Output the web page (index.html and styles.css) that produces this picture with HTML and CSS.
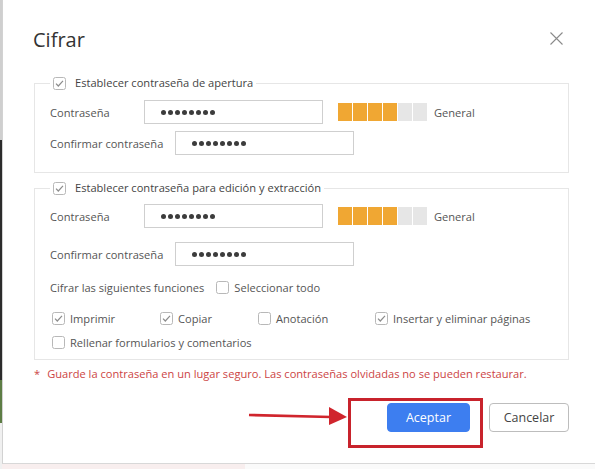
FILE: index.html
```html
<!DOCTYPE html>
<html lang="es">
<head>
<meta charset="utf-8">
<title>Cifrar</title>
<link rel="stylesheet" href="styles.css">
</head>
<body>
<div class="page">
  <div class="backstrip"></div>
  <div class="col">
    <div class="dialog">
      <div class="header">
        <h1 class="title">Cifrar</h1>
        <svg class="close" viewBox="0 0 13 13" width="13" height="13"><path d="M0.5 0.5 L12.5 12.5 M12.5 0.5 L0.5 12.5" stroke="#8a8a8a" stroke-width="1.1" fill="none"/></svg>
      </div>

      <fieldset class="section s1">
        <legend class="legend">
          <svg class="cb" viewBox="0 0 13 13"><rect x="0.5" y="0.5" width="12" height="12" rx="2" fill="#fff" stroke="#b8b8b8"/><path d="M3 6.6 L5.3 9 L10 3.8" fill="none" stroke="#8c8c8c" stroke-width="1.2"/></svg>
          <span class="legend-text">Establecer contraseña de apertura</span>
        </legend>
        <div class="row r-first">
          <span class="label w1">Contraseña</span>
          <div class="pw"><span class="dots"><i></i><i></i><i></i><i></i><i></i><i></i><i></i><i></i></span></div>
          <div class="strength"><b class="on"></b><b class="on"></b><b class="on"></b><b class="on"></b><b></b><b></b></div>
          <span class="level">General</span>
        </div>
        <div class="row r-second">
          <span class="label w2">Confirmar contraseña</span>
          <div class="pw"><span class="dots"><i></i><i></i><i></i><i></i><i></i><i></i><i></i><i></i></span></div>
        </div>
      </fieldset>

      <fieldset class="section s2">
        <legend class="legend">
          <svg class="cb" viewBox="0 0 13 13"><rect x="0.5" y="0.5" width="12" height="12" rx="2" fill="#fff" stroke="#b8b8b8"/><path d="M3 6.6 L5.3 9 L10 3.8" fill="none" stroke="#8c8c8c" stroke-width="1.2"/></svg>
          <span class="legend-text">Establecer contraseña para edición y extracción</span>
        </legend>
        <div class="row r-first2">
          <span class="label w1">Contraseña</span>
          <div class="pw"><span class="dots"><i></i><i></i><i></i><i></i><i></i><i></i><i></i><i></i></span></div>
          <div class="strength"><b class="on"></b><b class="on"></b><b class="on"></b><b class="on"></b><b></b><b></b></div>
          <span class="level">General</span>
        </div>
        <div class="row r-second2">
          <span class="label w2">Confirmar contraseña</span>
          <div class="pw"><span class="dots"><i></i><i></i><i></i><i></i><i></i><i></i><i></i><i></i></span></div>
        </div>
        <div class="line funcs">
          <span class="label">Cifrar las siguientes funciones</span>
          <span class="check sel">
            <svg class="cb" viewBox="0 0 13 13"><rect x="0.5" y="0.5" width="12" height="12" rx="2" fill="#fff" stroke="#b8b8b8"/></svg>
            <span>Seleccionar todo</span>
          </span>
        </div>
        <div class="opts">
          <span class="check">
            <svg class="cb" viewBox="0 0 13 13"><rect x="0.5" y="0.5" width="12" height="12" rx="2" fill="#fff" stroke="#b8b8b8"/><path d="M3 6.6 L5.3 9 L10 3.8" fill="none" stroke="#8c8c8c" stroke-width="1.2"/></svg>
            <span>Imprimir</span>
          </span>
          <span class="check">
            <svg class="cb" viewBox="0 0 13 13"><rect x="0.5" y="0.5" width="12" height="12" rx="2" fill="#fff" stroke="#b8b8b8"/><path d="M3 6.6 L5.3 9 L10 3.8" fill="none" stroke="#8c8c8c" stroke-width="1.2"/></svg>
            <span>Copiar</span>
          </span>
          <span class="check">
            <svg class="cb" viewBox="0 0 13 13"><rect x="0.5" y="0.5" width="12" height="12" rx="2" fill="#fff" stroke="#b8b8b8"/></svg>
            <span>Anotación</span>
          </span>
          <span class="check">
            <svg class="cb" viewBox="0 0 13 13"><rect x="0.5" y="0.5" width="12" height="12" rx="2" fill="#fff" stroke="#b8b8b8"/><path d="M3 6.6 L5.3 9 L10 3.8" fill="none" stroke="#8c8c8c" stroke-width="1.2"/></svg>
            <span>Insertar y eliminar páginas</span>
          </span>
        </div>
        <div class="line fill">
          <span class="check">
            <svg class="cb" viewBox="0 0 13 13"><rect x="0.5" y="0.5" width="12" height="12" rx="2" fill="#fff" stroke="#b8b8b8"/></svg>
            <span>Rellenar formularios y comentarios</span>
          </span>
        </div>
      </fieldset>

      <p class="warn"><span class="star">*</span>Guarde la contraseña en un lugar seguro. Las contraseñas olvidadas no se pueden restaurar.</p>

      <div class="actions">
        <button class="btn primary">Aceptar</button>
        <button class="btn secondary">Cancelar</button>
      </div>

      <div class="mark-box"></div>
      <svg class="mark-arrow" viewBox="0 0 102 22" width="102" height="22"><path d="M2 10 L84 12" stroke="#d0252d" stroke-width="2.6" fill="none"/><polygon points="82,2 100,12 82,20" fill="#d0252d"/></svg>
    </div>
    <div class="below"></div>
  </div>
</div>
</body>
</html>
```

FILE: styles.css
```css
* { box-sizing: border-box; }
html, body { margin: 0; padding: 0; }
body {
  width: 595px;
  height: 469px;
  overflow: hidden;
  background: #fff;
  font-family: "Open Sans", "Noto Sans", sans-serif;
  font-size: 11.1px;
  color: #555;
}
.page { display: flex; height: 469px; }
.backstrip {
  width: 2px;
  background: linear-gradient(to bottom, #cfcfcf 0 140px, #2b2b2b 140px 380px, #5d7d45 380px 423px, #f0f0f0 423px);
}
.col { flex: 1; display: flex; flex-direction: column; }
.dialog {
  position: relative;
  height: 464px;
  border-left: 1px solid #d2d2d2;
  border-bottom: 1px solid #d8d8d8;
  background: #fff;
  padding: 24px 26px 0 31px;
}
.below {
  flex: 1;
  background: linear-gradient(to right, #f8eeee 0 243px, #fafafa 243px);
}
.header {
  display: flex;
  justify-content: space-between;
  align-items: center;
  height: 32px;
}
.title {
  margin: 0 0 0 -1px;
  font-size: 20px;
  font-weight: 400;
  color: #333;
  line-height: 32px;
}
.close { margin-right: 6px; margin-top: -4px; }

.section {
  margin: 19px 0 0 0;
  padding: 0 0 17px 15px;
  border: 1px solid #e6e6e6;
  min-width: 0;
}
.s2 { margin-top: 7px; padding-bottom: 7px; }
.legend {
  padding: 0 3px;
  height: 16px;
  display: flex;
  align-items: center;
  color: #444;
}
.cb { width: 13px; height: 13px; flex: none; display: block; }
.legend-text { margin-left: 9px; line-height: 16px; }

.row { display: flex; align-items: center; height: 24px; }
.r-first { margin-top: 9px; }
.r-second { margin-top: 7px; }
.r-first2 { margin-top: 8px; }
.r-second2 { margin-top: 14px; }
.label { flex: none; white-space: nowrap; color: #555; }
.w1 { width: 94px; }
.w2 { width: 125px; }
.pw {
  width: 179px;
  height: 24px;
  border: 1px solid #cfcfcf;
  display: flex;
  align-items: center;
  padding-left: 16px;
}
.dots { display: flex; gap: 2px; }
.dots i { width: 5px; height: 5px; border-radius: 50%; background: #3c3c3c; display: block; }
.strength { display: flex; gap: 1px; margin-left: 15px; }
.strength b { width: 14px; height: 18px; background: #e6e6e6; display: block; }
.strength b.on { background: #f0a733; }
.level { margin-left: 7px; color: #555; }

.line { display: flex; align-items: center; height: 20px; }
.funcs { margin-top: 11px; }
.check { display: flex; align-items: center; gap: 5px; white-space: nowrap; color: #555; }
.sel { margin-left: 12px; }
.opts {
  display: grid;
  grid-template-columns: 108px 98px 117px auto;
  align-items: center;
  height: 20px;
  margin-top: 11px;
  padding-left: 2px;
}
.fill { margin-top: 4px; padding-left: 2px; }

.warn {
  margin: 5px 0 0 0;
  color: #cc4444;
  line-height: 18px;
  white-space: nowrap;
}
.star { margin-right: 7px; }

.actions {
  display: flex;
  justify-content: flex-end;
  gap: 19px;
  margin-top: 20px;
}
.btn {
  height: 29px;
  border-radius: 4px;
  font-family: "Open Sans", "Noto Sans", sans-serif;
  font-size: 12.5px;
  padding: 0;
}
.primary { width: 83px; background: #3d7ef0; border: 1px solid #3d7ef0; color: #fff; }
.secondary { width: 80px; background: #fff; border: 1px solid #bdbdbd; color: #444; }

.mark-box {
  position: absolute;
  left: 345px;
  top: 398px;
  width: 135px;
  height: 50px;
  border: 3px solid #c8232c;
}
.mark-arrow {
  position: absolute;
  left: 244px;
  top: 405px;
}
```
